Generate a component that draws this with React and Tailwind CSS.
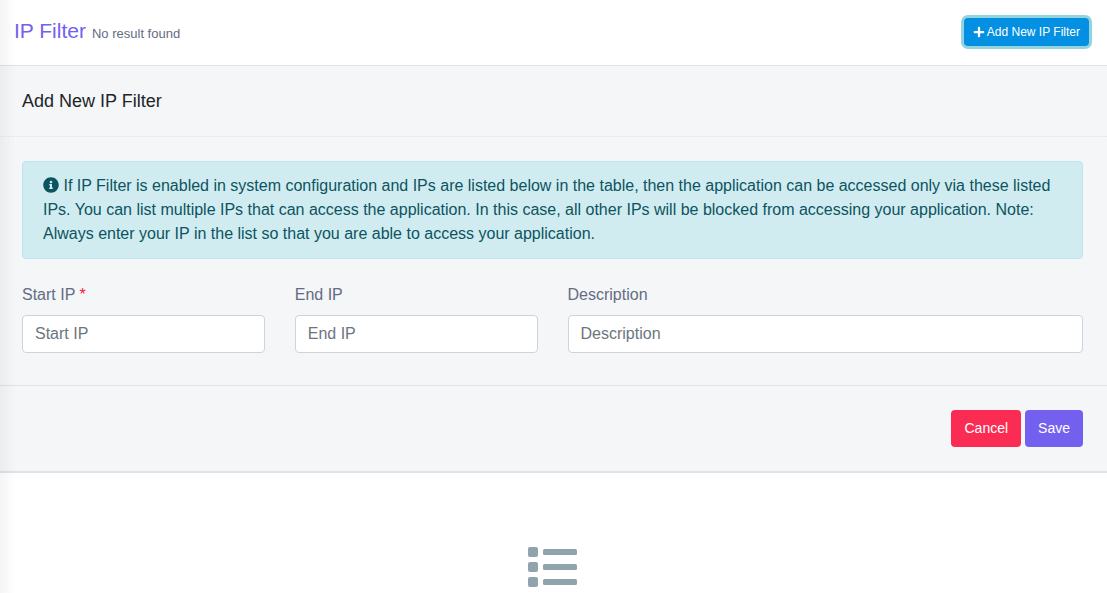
import React, { useState } from 'react';
import { FaPlus, FaInfoCircle } from 'react-icons/fa';

const Field = ({ id, label, required, value, onChange, className }) => (
    <div className={className}>
        <label htmlFor={id} className="block mb-2 text-[#646c82]">
            {label} {required && <span className="text-[#f1213f]">*</span>}
        </label>
        <input
            id={id}
            name={id}
            type="text"
            placeholder={label}
            className="block w-full h-[38px] px-3 rounded border border-[#ced4da] bg-white text-[#495057] placeholder:text-[#6c757d] outline-none"
            value={value}
            onChange={onChange}
        />
    </div>
);

const App = () => {
    const [formData, setFormData] = useState({ startIp: '', endIp: '', description: '' });

    const handleChange = (e) => {
        setFormData({ ...formData, [e.target.name]: e.target.value });
    };

    const handleReset = () => {
        setFormData({ startIp: '', endIp: '', description: '' });
    };

    return (
        <div className="relative min-h-screen overflow-hidden bg-white font-['Liberation_Sans',Arial,sans-serif] text-base leading-6">
            <header className="flex items-center justify-between h-[65px] pl-3.5 pr-[18px] pb-0.5">
                <div className="flex items-baseline gap-1.5 pt-0.5">
                    <h1 className="text-[21px] leading-6 text-[#7460ee]">IP Filter</h1>
                    <small className="text-[13px] text-[#646c82]">No result found</small>
                </div>
                <button
                    type="button"
                    className="flex items-center gap-0.5 h-7 px-[9px] rounded-sm bg-[#0390e3] text-white text-xs ring-3 ring-[#92d4de]"
                >
                    <FaPlus className="w-3 h-3" />
                    Add New IP Filter
                </button>
            </header>

            <form className="bg-[#f4f6f8] border-t border-b-2 border-[#dfe2e6]" onSubmit={(e) => e.preventDefault()}>
                <h2 className="px-[22px] py-[23px] text-lg leading-6 text-[#212529] border-b border-dotted border-[#e2e4e7]">
                    Add New IP Filter
                </h2>

                <div className="pl-[22px] pr-6 pt-6 pb-8">
                    <div className="px-5 py-3 rounded border border-[#bee5eb] bg-[#d1ecf1] text-[#0c5460]">
                        <FaInfoCircle className="inline w-4 h-4 -mt-1" /> If IP Filter is enabled in system
                        configuration and IPs are listed below in the table, then the application can be accessed only
                        via these listed IPs. You can list multiple IPs that can access the application. In this case,
                        all other IPs will be blocked from accessing your application. Note: Always enter your IP in the
                        list so that you are able to access your application.
                    </div>

                    <div className="grid grid-cols-4 gap-x-[30px] mt-6">
                        <Field id="startIp" label="Start IP" required value={formData.startIp} onChange={handleChange} />
                        <Field id="endIp" label="End IP" value={formData.endIp} onChange={handleChange} />
                        <Field
                            id="description"
                            label="Description"
                            className="col-span-2"
                            value={formData.description}
                            onChange={handleChange}
                        />
                    </div>
                </div>

                <div className="flex justify-end gap-1 px-6 py-6 border-t border-[#dfe2e6] text-sm leading-5 text-white">
                    <button type="button" className="px-[13px] pt-2 pb-[9px] rounded bg-[#fa2c54]" onClick={handleReset}>
                        Cancel
                    </button>
                    <button type="submit" className="px-[13px] pt-2 pb-[9px] rounded bg-[#7460ee]">
                        Save
                    </button>
                </div>
            </form>

            <div className="flex justify-center pt-[74px] pr-0.5">
                <svg viewBox="0 0 49 40" className="w-[49px] h-10" fill="#90a4ae">
                    <rect x="0" y="0" width="10" height="10" rx="2" />
                    <rect x="0" y="15" width="10" height="10" rx="2" />
                    <rect x="0" y="30" width="10" height="10" rx="2" />
                    <rect x="15" y="2" width="34" height="6" rx="1.5" />
                    <rect x="15" y="17" width="34" height="6" rx="1.5" />
                    <rect x="15" y="32" width="34" height="6" rx="1.5" />
                </svg>
            </div>

            {/* Sidebar shadow */}
            <div className="absolute inset-y-0 left-0 w-4 bg-linear-to-r from-black/4 to-transparent pointer-events-none" />
        </div>
    );
};

export default App;
